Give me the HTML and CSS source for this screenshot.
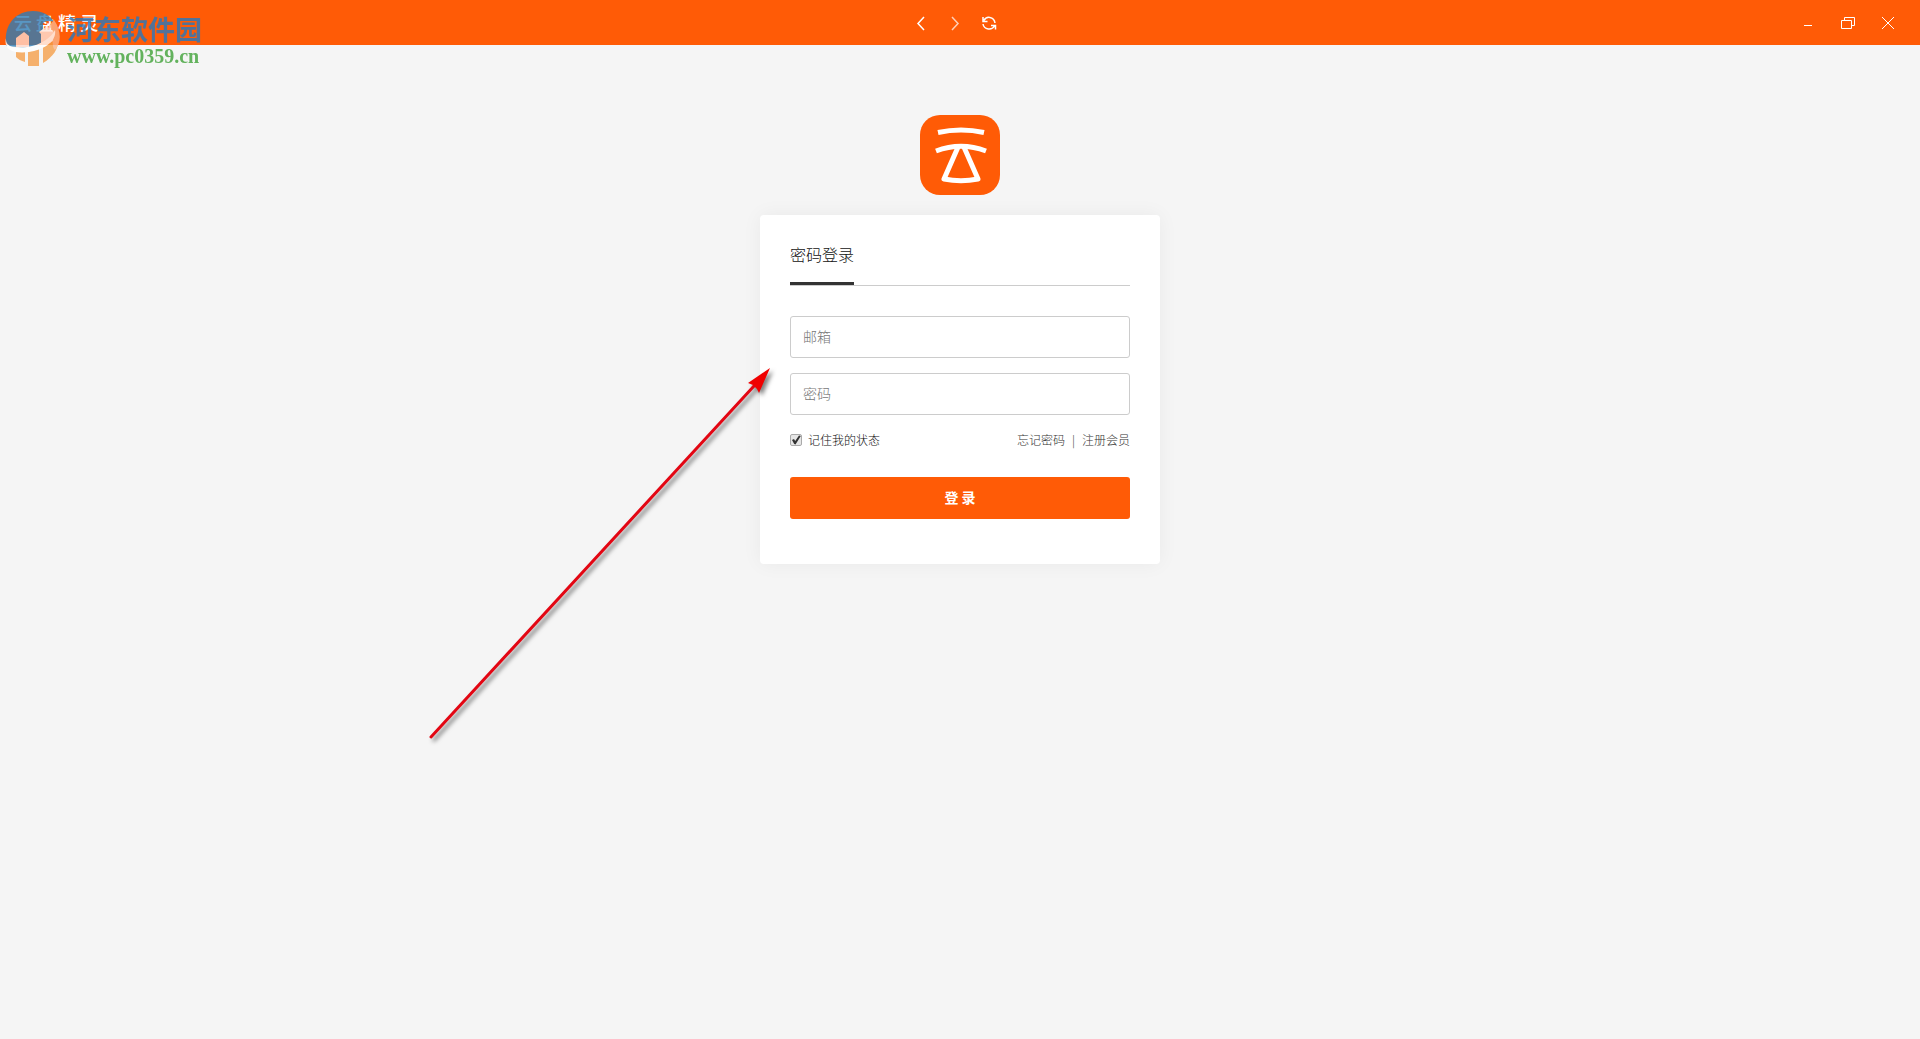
FILE: index.html
```html
<!DOCTYPE html>
<html lang="zh-CN">
<head>
  <meta charset="UTF-8">
  <meta name="viewport" content="width=device-width, initial-scale=1.0">
  <title>云盘精灵</title>
  <link rel="stylesheet" href="styles.css">
</head>
<body>
<header class="titlebar">
  <div class="title">云 盘 精 灵</div>
  <nav class="nav">
    <button type="button" aria-label="后退">
      <svg width="16" height="16" viewBox="0 0 16 16"><path d="M11 2L5 8.500L11 15"/></svg>
    </button>
    <button type="button" class="dim" aria-label="前进">
      <svg width="16" height="16" viewBox="0 0 16 16"><path d="M5 2L11 8.500L5 15"/></svg>
    </button>
    <button type="button" aria-label="刷新">
      <svg width="16" height="16" viewBox="0 0 16 16"><path d="M2 2V6.500H6.500M3 5.500C5 1 13 1 14 8M14.500 14.500V10.500H10M13.500 11C11 15.500 3 15 2 9"/></svg>
    </button>
  </nav>
  <div class="window-buttons">
    <button type="button" aria-label="最小化">
      <svg width="16" height="16" viewBox="0 0 16 16"><path class="thin" d="M4 10.500H12"/></svg>
    </button>
    <button type="button" aria-label="还原">
      <svg width="16" height="16" viewBox="0 0 16 16"><path class="thin" d="M1.500 5.500H11.500V13.500H1.500ZM4.500 5.500V2.500H14.500V10.500H11.500"/></svg>
    </button>
    <button type="button" aria-label="关闭">
      <svg width="16" height="16" viewBox="0 0 16 16"><path class="thin" d="M2 2L14 14M14 2L2 14"/></svg>
    </button>
  </div>
</header>

<main class="content">
  <svg class="logo" width="80" height="80" viewBox="0 0 80 80" aria-hidden="true">
    <rect width="80" height="80" rx="20" fill="#ff5b06"/>
    <g fill="none" stroke="#fff" stroke-width="5">
      <path d="M18 17.500Q41 12.500 64 17.500"/>
      <path d="M16 36Q41 26.500 66 36"/>
      <path d="M38.500 31L24 64Q41 67.500 58 64L43.500 31" stroke-linejoin="round"/>
    </g>
  </svg>

  <form class="card">
    <div class="tabs">
      <a class="tab" href="#">密码登录</a>
    </div>
    <input class="field" type="email" placeholder="邮箱" aria-label="邮箱">
    <input class="field" type="password" placeholder="密码" aria-label="密码">
    <div class="options">
      <label class="remember"><input type="checkbox" checked>记住我的状态</label>
      <div class="links"><a href="#">忘记密码</a><span>|</span><a href="#">注册会员</a></div>
    </div>
    <button class="login" type="submit">登 录</button>
  </form>
</main>

<div class="watermark">
  <svg width="56" height="60" viewBox="0 0 56 60" aria-hidden="true">
    <!-- upper blue half -->
    <path fill="#2f7cb5" d="M1 36C-1 16 11 3 28 3C38 3 45 7 49 14C44 12 40 13 38 15V37L25 40L1 38Z"/>
    <!-- lower orange half and the side of the ring -->
    <path fill="#f5a04a" d="M11 43L20 44V54C16 53 13 51 11 49ZM23 43L34 41V58H23ZM38 38L53 30C54 41 48 49 38 55Z"/>
    <path fill="#fbb48a" d="M49 12C56 22 57 34 50 42C45 38 51 26 44 18Z"/>
    <!-- roofs -->
    <path fill="#ffd9cc" d="M11 30L19 24L24 28V39H11Z"/>
    <path fill="#ffe4da" d="M34 24L42 18L49 24L48 33L41 37H36V26Z"/>
    <!-- white band -->
    <path fill="#fff" d="M1 30C0 39 10 41 22 39C36 37 46 30 50 22C52 33 39 42 24 44C9 46 -2 42 1 30Z"/>
  </svg>
  <div class="watermark-text">
    <div class="site-name">河东软件园</div>
    <div class="site-url">www.pc0359.cn</div>
  </div>
</div>

<svg class="arrow" width="350" height="384" viewBox="0 0 350 384" aria-hidden="true">
  <path d="M6 377L329 26" stroke="#e30613" stroke-width="3" stroke-linecap="round"/>
  <path d="M345 8L323 23L328 25L332 29L334 33Z" fill="#f00000"/>
</svg>
</body>
</html>
```
FILE: styles.css
```css
* {
  box-sizing: border-box;
}

body {
  margin: 0;
  min-height: 100vh;
  background: #f5f5f5;
  color: #111;
  font: 300 12px "Noto Sans CJK SC", sans-serif;
}

button {
  padding: 0;
  border: 0;
  background: none;
  font-family: inherit;
  cursor: pointer;
}

a {
  color: inherit;
  text-decoration: none;
}

/* title bar */
.titlebar {
  display: grid;
  grid-template-columns: 1fr auto 1fr;
  align-items: center;
  height: 45px;
  padding: 0 24px 0 14px;
  background: #ff5b06;
  color: #fff;
}

.title {
  padding-bottom: 2px;
  font-size: 18px;
  font-weight: 500;
}

.nav {
  display: flex;
  gap: 18px;
}

.window-buttons {
  display: flex;
  justify-content: flex-end;
  gap: 24px;
}

.titlebar svg {
  display: block;
  fill: none;
  stroke: #fff;
  stroke-width: 1.5;
}

.titlebar .thin {
  stroke-width: 1;
}

.dim {
  opacity: 0.7;
}

/* login */
.content {
  display: flex;
  flex-direction: column;
  align-items: center;
  padding-top: 70px;
}

.card {
  width: 400px;
  margin-top: 20px;
  padding: 28px 30px 45px;
  border-radius: 4px;
  background: #fff;
  box-shadow: 0 0 20px rgba(0, 0, 0, 0.05);
}

.tabs {
  display: flex;
  margin-bottom: 30px;
  border-bottom: 1px solid #ccc;
}

.tab {
  padding-bottom: 17px;
  border-bottom: 3px solid #333;
  font-size: 16px;
  line-height: 22px;
}

.field {
  display: block;
  width: 100%;
  height: 42px;
  margin-bottom: 15px;
  padding: 0 12px 2px;
  border: 1px solid #ccc;
  border-radius: 3px;
  font-family: inherit;
  font-size: 14px;
  font-weight: 300;
}

.field::placeholder {
  color: #777;
}

.options {
  display: flex;
  justify-content: space-between;
  margin: 16px 0 28px;
  line-height: 18px;
}

.remember {
  display: flex;
  align-items: center;
  gap: 6px;
}

.remember input {
  appearance: none;
  width: 12px;
  height: 12px;
  margin: 0;
  border: 1px solid #aaa;
  border-radius: 2px;
  background: #e6e6e6;
}

.remember input:checked::before {
  content: "";
  display: block;
  width: 10px;
  height: 10px;
  background: #333;
  clip-path: polygon(10% 50%, 30% 40%, 42% 60%, 80% 5%, 98% 10%, 45% 95%, 32% 90%);
}

.links {
  display: flex;
  gap: 7px;
  color: #333;
}

.login {
  display: block;
  width: 100%;
  height: 42px;
  padding-bottom: 2px;
  border-radius: 3px;
  background: #ff5b06;
  color: #fff;
  font-size: 14px;
  font-weight: bold;
}

/* overlays */
.watermark {
  position: absolute;
  top: 8px;
  left: 5px;
  display: flex;
  gap: 6px;
  opacity: 0.8;
  pointer-events: none;
}

.watermark-text {
  padding-top: 5px;
}

.site-name {
  color: #2878bd;
  font-size: 27px;
  font-weight: bold;
  line-height: 32px;
}

.site-url {
  color: #3fa238;
  font: bold 20px/22px "Liberation Serif", serif;
}

.arrow {
  position: absolute;
  top: 360px;
  left: 425px;
  filter: drop-shadow(3px 3px 2px rgba(0, 0, 0, 0.5));
  pointer-events: none;
}
```
